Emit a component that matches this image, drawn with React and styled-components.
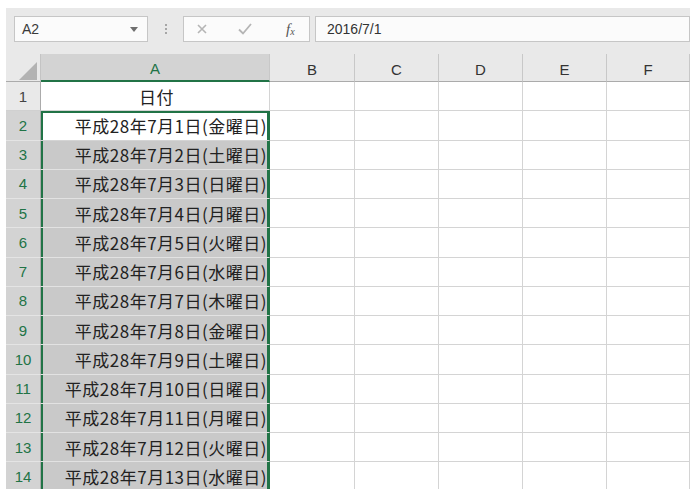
import styled, { createGlobalStyle } from "styled-components";

const GREEN = "#217346";
const WEEK = ["日", "月", "火", "水", "木", "金", "土"];
const COLS = ["A", "B", "C", "D", "E", "F"];

const dates = Array.from({ length: 13 }, (_, i) => {
    const d = new Date(2016, 6, i + 1);
    return `平成28年7月${i + 1}日(${WEEK[d.getDay()]}曜日)`;
});

function App(){
    return(
        <>
            <GlobalStyle/>
            <Frame>
                <Toolbar>
                    <NameBox>
                        A2
                        <DropArrow viewBox="0 0 8 5"><path d="M0 0h8L4 5z"/></DropArrow>
                    </NameBox>
                    <Grip><i/><i/><i/></Grip>
                    <FxBox>
                        <FxIcon space="30px">
                            <svg width="12" height="12" viewBox="0 0 12 12"><path d="M2 2l8 8M10 2l-8 8" stroke="currentColor" strokeWidth="1.6" fill="none"/></svg>
                        </FxIcon>
                        <FxIcon space="34px">
                            <svg width="14" height="12" viewBox="0 0 14 12"><path d="M1 6.5l4 4L13 1" stroke="currentColor" strokeWidth="1.8" fill="none"/></svg>
                        </FxIcon>
                        <FxLabel>f<sub>x</sub></FxLabel>
                    </FxBox>
                    <Formula>2016/7/1</Formula>
                </Toolbar>
                <Sheet>
                    <Corner>
                        <svg width="35" height="28" viewBox="0 0 35 28"><polygon points="31,8 31,26 13,26" fill="#b3b3b3"/></svg>
                    </Corner>
                    {COLS.map(c => <ColHead key={c} active={c === "A"}>{c}</ColHead>)}

                    <RowHead>1</RowHead>
                    <Cell center>日付</Cell>
                    {COLS.slice(1).map(c => <Cell key={c}/>)}

                    {dates.map((t, i) => (
                        <Row key={t} n={i + 2} text={t} first={i === 0}/>
                    ))}
                </Sheet>
            </Frame>
        </>
    )
}

function Row({ n, text, first }){
    return(
        <>
            <RowHead selected>{n}</RowHead>
            <Cell selected={!first} edge={first ? "top" : "side"}>{text}</Cell>
            {COLS.slice(1).map(c => <Cell key={c}/>)}
        </>
    )
}

const GlobalStyle = createGlobalStyle`
    body{
        margin: 0;
        background: #fff;
        font-family: "Liberation Sans", Arial, sans-serif;
    }
`

const Frame = styled.div`
    margin: 8px 8px 0 6px;
    width: 684px;
    height: 481px;
    overflow: hidden;
    background: #e9e9e9;
`

const Toolbar = styled.div`
    display: flex;
    align-items: center;
    height: 26px;
    padding: 8px 0 12px 8px;
`

const Box = styled.div`
    height: 26px;
    box-sizing: border-box;
    border: 1px solid #c6c6c6;
    background: #fbfbfb;
    display: flex;
    align-items: center;
`

const NameBox = styled(Box)`
    width: 134px;
    padding: 0 9px 0 7px;
    justify-content: space-between;
    font-size: 14px;
    color: #3a3a3a;
`

const DropArrow = styled.svg`
    width: 8px;
    height: 5px;
    fill: #6f6f6f;
`

const Grip = styled.div`
    width: 35px;
    display: flex;
    flex-direction: column;
    align-items: center;
    gap: 2px;
    i{
        width: 2px;
        height: 2px;
        background: #a6a6a6;
    }
`

const FxBox = styled(Box)`
    width: 127px;
    padding-left: 12px;
`

const FxIcon = styled.span`
    display: flex;
    color: #b5b5b5;
    margin-right: ${p => p.space};
`

const FxLabel = styled.span`
    font-family: "Liberation Serif", serif;
    font-style: italic;
    font-size: 15px;
    color: #555;
    sub{
        font-size: 10px;
        vertical-align: -1px;
    }
`

const Formula = styled(Box)`
    flex: 1;
    margin-left: 5px;
    padding-left: 11px;
    font-size: 14px;
    color: #333;
`

const Sheet = styled.div`
    display: grid;
    grid-template-columns: 35px 229px 85px 84px 84px 84px 83px;
    grid-template-rows: 28px;
    grid-auto-rows: 29.25px;
`

const Corner = styled.div`
    background: #e9e9e9;
    border-bottom: 1px solid #ababab;
    border-right: 1px solid #c4c4c4;
    box-sizing: border-box;
    svg{ display: block; }
`

const ColHead = styled.div`
    display: flex;
    align-items: center;
    justify-content: center;
    box-sizing: border-box;
    padding-top: 3px;
    font-size: 15px;
    color: ${p => p.active ? GREEN : "#333"};
    background: ${p => p.active ? "#d3d3d3" : "#e9e9e9"};
    border-bottom: ${p => p.active ? `2px solid ${GREEN}` : "1px solid #ababab"};
    border-right: 1px solid #c8c8c8;
`

const RowHead = styled.div`
    display: flex;
    align-items: center;
    justify-content: center;
    box-sizing: border-box;
    font-size: 15px;
    color: ${p => p.selected ? GREEN : "#444"};
    background: ${p => p.selected ? "#d3d3d3" : "#e9e9e9"};
    border-bottom: 1px solid ${p => p.selected ? "#e4e4e4" : "#d0d0d0"};
    border-right: 1px solid #ababab;
`

const edges = {
    top: `inset 2px 0 ${GREEN}, inset -2px 0 ${GREEN}, inset 0 2px ${GREEN}`,
    side: `inset 2px 0 ${GREEN}, inset -2px 0 ${GREEN}`,
};

const Cell = styled.div`
    display: flex;
    align-items: center;
    justify-content: ${p => p.center ? "center" : "flex-end"};
    box-sizing: border-box;
    padding: 0 2px 0 5px;
    font-family: "Noto Sans CJK JP", "Noto Sans", sans-serif;
    font-size: 17px;
    letter-spacing: 0.5px;
    color: #222;
    white-space: nowrap;
    background: ${p => p.selected ? "#c9c9c9" : "#fff"};
    border-bottom: 1px solid ${p => p.selected ? "#e2e2e2" : "#d4d4d4"};
    border-right: 1px solid ${p => p.edge ? GREEN : "#d4d4d4"};
    box-shadow: ${p => p.edge ? edges[p.edge] : "none"};
`

export default App;
